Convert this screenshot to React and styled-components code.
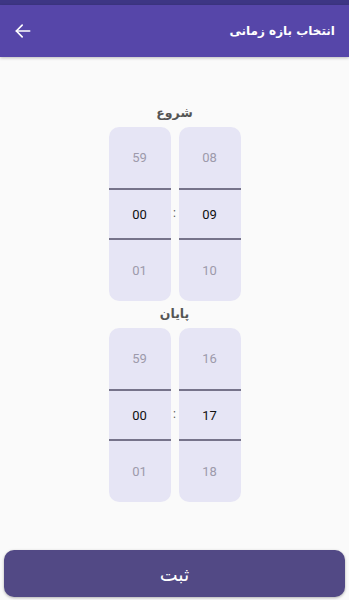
import React from 'react';
import styled, { createGlobalStyle } from 'styled-components';

const GlobalStyle = createGlobalStyle`
  html, body {
    margin: 0;
    padding: 0;
    background: #fafafa;
  }
  body {
    font-family: Roboto, "DejaVu Sans", sans-serif;
  }
`;

const Screen = styled.div`
  width: 349px;
  height: 600px;
  display: flex;
  flex-direction: column;
  background: #fafafa;
  overflow: hidden;
`;

const StatusStrip = styled.div`
  height: 5px;
  background: #3d3684;
`;

const Header = styled.div`
  height: 52px;
  background: #5646a9;
  display: flex;
  align-items: center;
  justify-content: space-between;
  padding: 0 14px 0 13px;
  box-shadow: 0 1px 3px rgba(0, 0, 0, 0.25);
`;

const Title = styled.div`
  direction: rtl;
  color: #fff;
  font-family: "DejaVu Sans", sans-serif;
  font-weight: bold;
  font-size: 12px;
`;

const BackButton = styled.div`
  display: flex;
  align-items: center;
`;

const Content = styled.div`
  flex: 1;
  display: flex;
  flex-direction: column;
  align-items: center;
  padding-top: 44px;
`;

const Section = styled.div`
  display: flex;
  flex-direction: column;
  align-items: center;
  margin-bottom: ${(p) => p.$gap}px;
`;

const Label = styled.div`
  direction: rtl;
  font-family: "DejaVu Sans", sans-serif;
  font-weight: bold;
  font-size: 12.5px;
  color: #555;
  height: 24px;
  line-height: 24px;
  margin-bottom: 2px;
`;

const Pickers = styled.div`
  display: flex;
  align-items: stretch;
`;

const Wheel = styled.div`
  width: 62px;
  height: 174px;
  background: #e6e5f5;
  border-radius: 10px;
  display: flex;
  flex-direction: column;
`;

const Cell = styled.div`
  height: ${(p) => (p.$active ? 48 : 62)}px;
  display: flex;
  align-items: center;
  justify-content: center;
  font-size: 13px;
  color: ${(p) => (p.$active ? '#111' : '#9d9aab')};
  ${(p) =>
    p.$active &&
    `border-top: 2px solid #76738a; border-bottom: 2px solid #76738a;`}
`;

const Colon = styled.div`
  width: 8px;
  display: flex;
  align-items: center;
  justify-content: center;
  font-size: 12px;
  color: #555;
  padding-bottom: 2px;
`;

const Footer = styled.div`
  padding: 0 4px 3px 4px;
`;

const SubmitButton = styled.div`
  height: 47px;
  border-radius: 10px;
  background: #524985;
  display: flex;
  align-items: center;
  justify-content: center;
  color: #fff;
  font-family: "DejaVu Sans", sans-serif;
  font-size: 19px;
  box-shadow: 0 1px 3px rgba(0, 0, 0, 0.3);
`;

function Arrow() {
  return (
    <svg width="20" height="20" viewBox="0 0 24 24" fill="none" stroke="#fff" strokeWidth="2" strokeLinecap="round" strokeLinejoin="round">
      <path d="M20 12H4" />
      <path d="M11 5l-7 7 7 7" />
    </svg>
  );
}

function TimeWheel({ values }) {
  return (
    <Wheel>
      <Cell>{values[0]}</Cell>
      <Cell $active>{values[1]}</Cell>
      <Cell>{values[2]}</Cell>
    </Wheel>
  );
}

function TimePicker({ label, hours, minutes, gap }) {
  return (
    <Section $gap={gap}>
      <Label>{label}</Label>
      <Pickers>
        <TimeWheel values={minutes} />
        <Colon>:</Colon>
        <TimeWheel values={hours} />
      </Pickers>
    </Section>
  );
}

export default function App() {
  return (
    <Screen>
      <GlobalStyle />
      <StatusStrip />
      <Header>
        <BackButton>
          <Arrow />
        </BackButton>
        <Title>انتخاب بازه زمانی</Title>
      </Header>
      <Content>
        <TimePicker label="شروع" hours={['08', '09', '10']} minutes={['59', '00', '01']} gap={1} />
        <TimePicker label="پایان" hours={['16', '17', '18']} minutes={['59', '00', '01']} gap={0} />
      </Content>
      <Footer>
        <SubmitButton>ثبت</SubmitButton>
      </Footer>
    </Screen>
  );
}
